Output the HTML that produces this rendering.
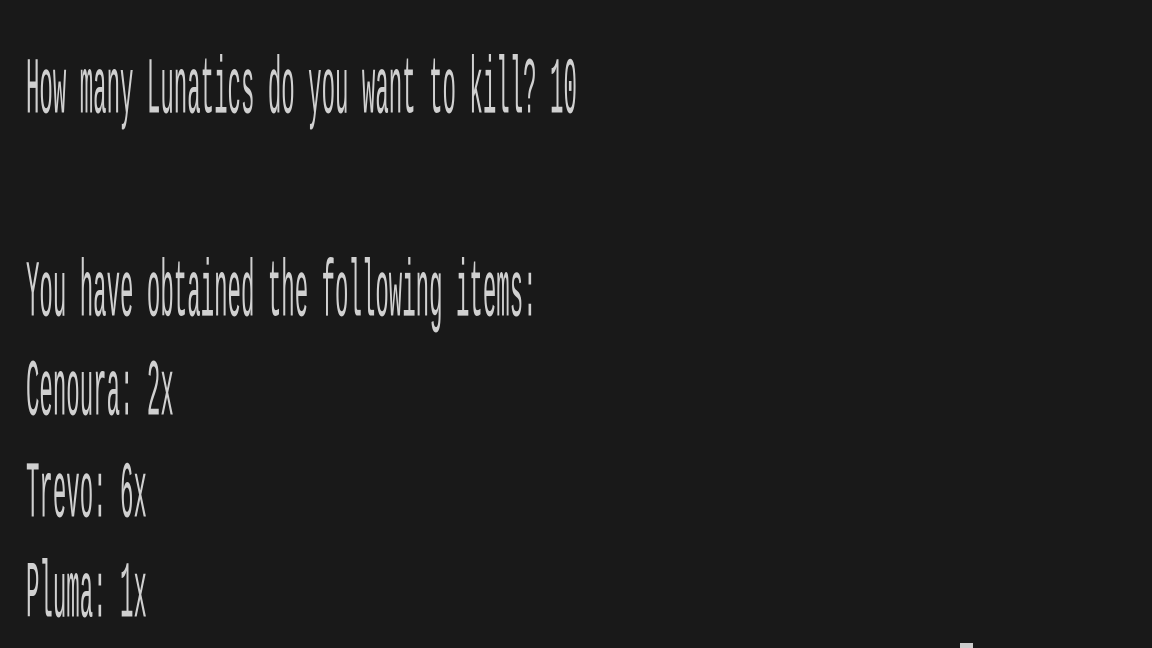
<!DOCTYPE html>
<html><head><meta charset="utf-8"><style>
html,body{margin:0;padding:0;background:#191919;width:1152px;height:648px;overflow:hidden;position:relative}
.l{position:absolute;left:26px;font-family:"Liberation Mono",monospace;font-size:22.4px;line-height:22.4px;color:#d0d0d0;white-space:pre;transform:scaleY(3.6);transform-origin:0 17.2px;letter-spacing:0}
.c{position:absolute;left:960px;top:643px;width:13px;height:5px;background:#cccccc}
</style></head><body>
<div class="l" style="top:95.8px">How many Lunatics do you want to kill? 10</div>
<div class="l" style="top:298.8px">You have obtained the following items:</div>
<div class="l" style="top:397.8px">Cenoura: 2x</div>
<div class="l" style="top:499.8px">Trevo: 6x</div>
<div class="l" style="top:599.8px">Pluma: 1x</div>
<div class="c"></div>
</body></html>
